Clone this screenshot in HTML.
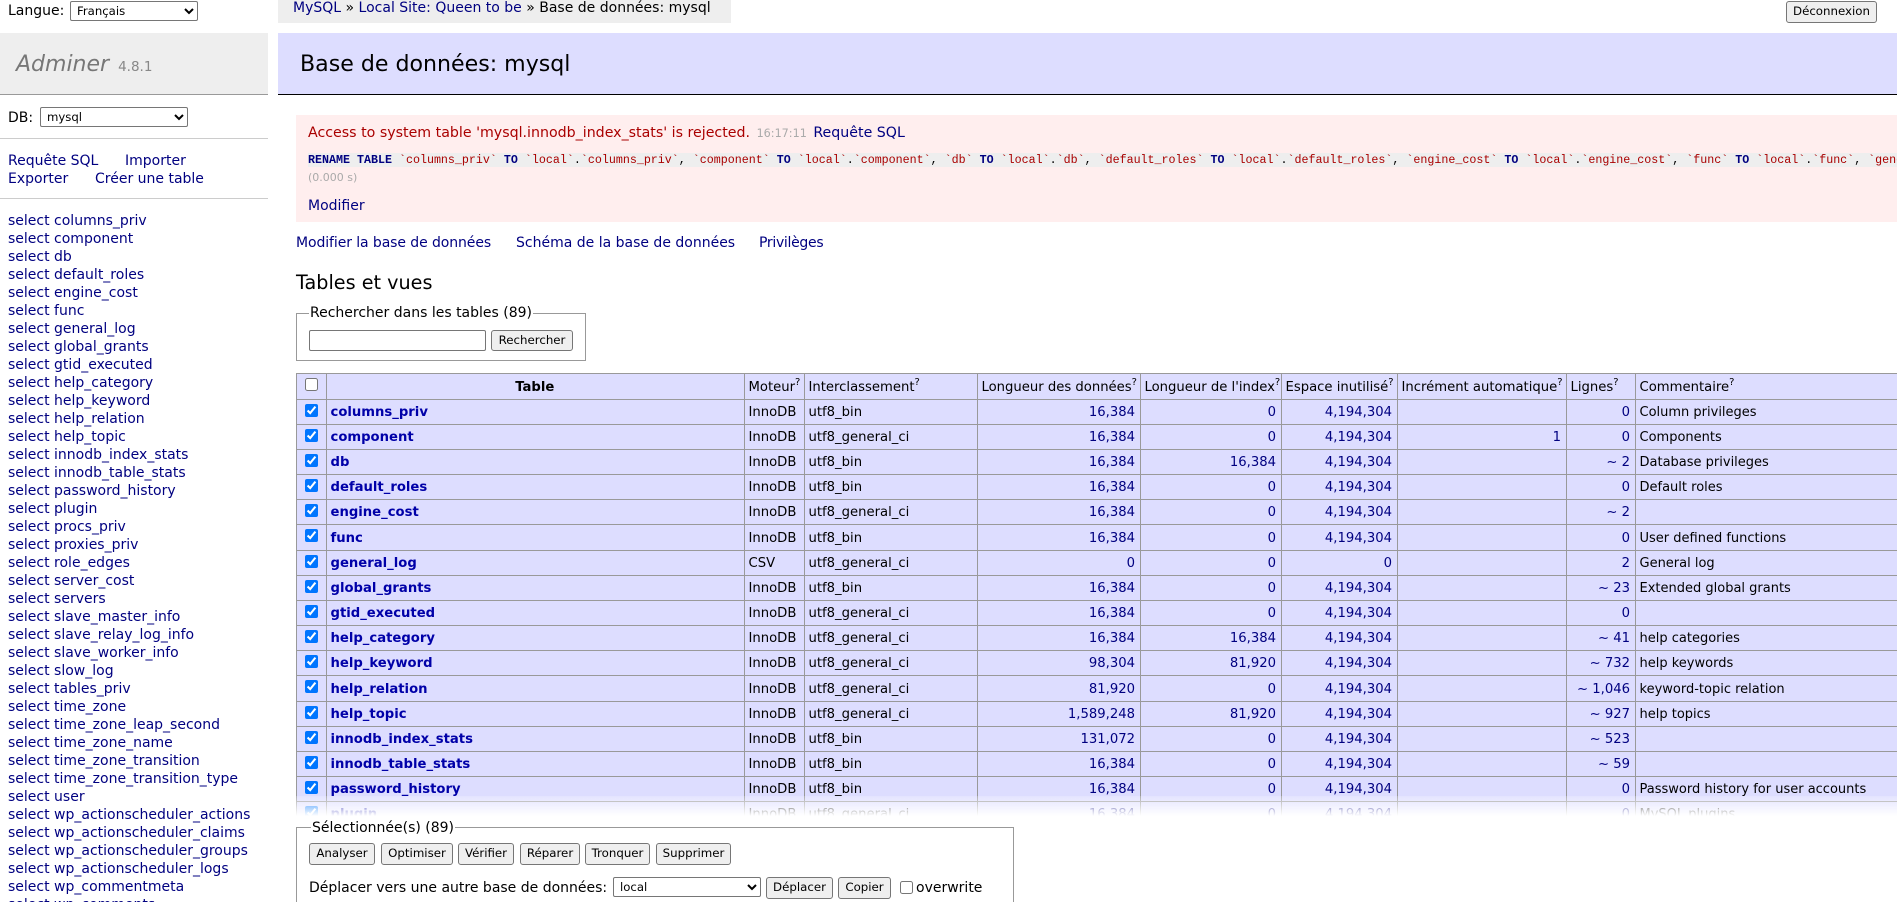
<!DOCTYPE html>
<html lang="fr"><head><meta charset="utf-8"><title>Base de données: mysql - Adminer</title>
<style>
html,body{margin:0;padding:0;width:1897px;height:902px;overflow:hidden;background:#fff}
body{font:14px/18px "DejaVu Sans","Liberation Sans",sans-serif;color:#000}
#page{position:absolute;left:0;top:0;width:1897px;height:902px;overflow:hidden;background:#fff}
a{color:#000080;text-decoration:none}
.a{position:absolute;white-space:nowrap}
.bar{position:absolute;left:0;width:268px;height:1px;background:#ccc}
select{position:absolute;box-sizing:border-box;font:11.7px "DejaVu Sans",sans-serif;margin:0;background:#fff;border:1px solid #767676;border-radius:2px;padding:0 0 0 2px}
.btn{position:absolute;box-sizing:border-box;font:11.8px/18px "DejaVu Sans",sans-serif;background:#efefef;border:1px solid #767676;border-radius:3px;text-align:center;color:#000;white-space:nowrap;overflow:hidden}
#side{height:691px;overflow:hidden}
#side a{display:block}
#wrap{position:absolute;left:296px;top:373px;width:1601px;height:529px;overflow:hidden}
#tb{border-collapse:collapse;table-layout:fixed;width:1704px;font-size:13.2px;line-height:18px}
#tb td,#tb th{border:1px solid #999;background:#ddf;padding:2px 5px 0 3.5px;white-space:nowrap;overflow:hidden;vertical-align:middle}
#tb th{font-weight:bold;text-align:center}
#tb thead td{font-weight:normal;padding-top:3px}
#tb td:first-child,#tb th:first-child{padding:0;text-align:center}
#tb input{margin:0;vertical-align:middle;position:relative;top:-1px}
#tb .n{text-align:right;color:#000080}
#tb .c{font-size:13px}
#tb b a{color:#0000a8}
#tb b{font-size:13.2px}
sup{font-size:10px;line-height:0;vertical-align:6px}
code{font:11.67px/14px "Liberation Mono",monospace;background:#eee;color:#a00}
code i{font-style:normal;font-weight:bold;color:#000080}
code u{text-decoration:none;color:#000}
</style></head><body><div id="page">

<div class="a" style="left:8px;top:2px">Langue:</div>
<select style="left:70px;top:1px;width:128px;height:20px"><option>Français</option></select>

<div class="a" style="left:0;top:33px;width:268px;height:61px;background:#eee;border-bottom:1px solid #999"></div>
<div class="a" style="left:16px;top:51px;font-size:22px;line-height:27px;font-style:italic;color:#777">Adminer <span style="font-style:normal;font-size:13.5px;margin-left:2px;color:#888">4.8.1</span></div>

<div class="a" style="left:8px;top:109px">DB:</div>
<select style="left:40px;top:107px;width:148px;height:20px"><option>mysql</option></select>
<div class="bar" style="top:138px"></div>

<div class="a" style="left:8px;top:152px"><a href="#">Requête SQL</a></div>
<div class="a" style="left:125px;top:152px"><a href="#">Importer</a></div>
<div class="a" style="left:8px;top:170px"><a href="#">Exporter</a></div>
<div class="a" style="left:95px;top:170px"><a href="#">Créer une table</a></div>
<div class="bar" style="top:198px"></div>

<div id="side" class="a" style="left:8px;top:212px">
<a href="#">select columns_priv</a>
<a href="#">select component</a>
<a href="#">select db</a>
<a href="#">select default_roles</a>
<a href="#">select engine_cost</a>
<a href="#">select func</a>
<a href="#">select general_log</a>
<a href="#">select global_grants</a>
<a href="#">select gtid_executed</a>
<a href="#">select help_category</a>
<a href="#">select help_keyword</a>
<a href="#">select help_relation</a>
<a href="#">select help_topic</a>
<a href="#">select innodb_index_stats</a>
<a href="#">select innodb_table_stats</a>
<a href="#">select password_history</a>
<a href="#">select plugin</a>
<a href="#">select procs_priv</a>
<a href="#">select proxies_priv</a>
<a href="#">select role_edges</a>
<a href="#">select server_cost</a>
<a href="#">select servers</a>
<a href="#">select slave_master_info</a>
<a href="#">select slave_relay_log_info</a>
<a href="#">select slave_worker_info</a>
<a href="#">select slow_log</a>
<a href="#">select tables_priv</a>
<a href="#">select time_zone</a>
<a href="#">select time_zone_leap_second</a>
<a href="#">select time_zone_name</a>
<a href="#">select time_zone_transition</a>
<a href="#">select time_zone_transition_type</a>
<a href="#">select user</a>
<a href="#">select wp_actionscheduler_actions</a>
<a href="#">select wp_actionscheduler_claims</a>
<a href="#">select wp_actionscheduler_groups</a>
<a href="#">select wp_actionscheduler_logs</a>
<a href="#">select wp_commentmeta</a>
<a href="#">select wp_comments</a>
</div>

<div class="a" style="left:278px;top:0;width:453px;height:23px;background:#eee"></div>
<div class="a" style="left:293px;top:-1px"><a href="#">MySQL</a> » <a href="#">Local Site: Queen to be</a> » Base de données: mysql</div>
<div class="btn" style="left:1786px;top:1px;width:91px;height:22px">Déconnexion</div>

<div class="a" style="left:278px;top:33px;width:1619px;height:61px;background:#ddf;border-bottom:1px solid #000"></div>
<div class="a" style="left:300px;top:51px;font-size:22.1px;line-height:27px">Base de données: mysql</div>

<div class="a" style="left:296px;top:115px;width:1601px;height:107px;background:#fee"></div>
<div class="a" style="left:308px;top:124px;color:#a00;font-size:14.2px">Access to system table 'mysql.innodb_index_stats' is rejected. <span style="color:#aaa;font-size:11.2px;margin:0 2px">16:17:11</span> <a href="#">Requête SQL</a></div>
<div class="a" style="left:308px;top:151px;line-height:16px;width:1589px;overflow:hidden"><code><i>RENAME</i> <i>TABLE</i> `columns_priv` <i>TO</i> `local`<u>.</u>`columns_priv`<u>,</u> `component` <i>TO</i> `local`<u>.</u>`component`<u>,</u> `db` <i>TO</i> `local`<u>.</u>`db`<u>,</u> `default_roles` <i>TO</i> `local`<u>.</u>`default_roles`<u>,</u> `engine_cost` <i>TO</i> `local`<u>.</u>`engine_cost`<u>,</u> `func` <i>TO</i> `local`<u>.</u>`func`<u>,</u> `general_log` <i>TO</i> `local`<u>.</u>`general_log`<u>,</u></code></div>
<div class="a" style="left:308px;top:169px;font-size:11px;color:#aaa">(0.000 s)</div>
<div class="a" style="left:308px;top:197px"><a href="#">Modifier</a></div>

<div class="a" style="left:296px;top:234px"><a href="#" style="letter-spacing:-.09px">Modifier la base de données</a></div>
<div class="a" style="left:516px;top:234px"><a href="#">Schéma de la base de données</a></div>
<div class="a" style="left:759px;top:234px"><a href="#" style="letter-spacing:-.3px">Privilèges</a></div>

<div class="a" style="left:296px;top:271px;font-size:19.2px;line-height:23px">Tables et vues</div>

<div class="a" style="left:296px;top:313px;width:288px;height:46px;border:1px solid #999"></div>
<div class="a" style="left:309px;top:304px;background:#fff;padding:0 1px">Rechercher dans les tables (89)</div>
<div class="a" style="left:309px;top:330px;width:177px;height:21px;box-sizing:border-box;border:1px solid #767676;border-radius:2px;background:#fff"></div>
<div class="btn" style="left:491px;top:330px;width:82px;height:21px">Rechercher</div>

<div id="wrap"><table id="tb">
<colgroup><col style="width:30px"><col style="width:418px"><col style="width:60px"><col style="width:173px"><col style="width:163px"><col style="width:141px"><col style="width:116px"><col style="width:169px"><col style="width:69px"><col style="width:565px"></colgroup>
<thead><tr style="height:26px"><td><input type="checkbox"></td><th style="text-align:center">Table</th><td>Moteur<sup>?</sup></td><td>Interclassement<sup>?</sup></td><td>Longueur des données<sup>?</sup></td><td>Longueur de l'index<sup>?</sup></td><td>Espace inutilisé<sup>?</sup></td><td>Incrément automatique<sup>?</sup></td><td>Lignes<sup>?</sup></td><td>Commentaire<sup>?</sup></td></tr></thead>
<tbody>
<tr style="height:25px"><td><input type="checkbox" checked></td><td><b><a href="#">columns_priv</a></b></td><td>InnoDB</td><td>utf8_bin</td><td class="n">16,384</td><td class="n">0</td><td class="n">4,194,304</td><td class="n"></td><td class="n">0</td><td class="c">Column privileges</td></tr>
<tr style="height:25px"><td><input type="checkbox" checked></td><td><b><a href="#">component</a></b></td><td>InnoDB</td><td>utf8_general_ci</td><td class="n">16,384</td><td class="n">0</td><td class="n">4,194,304</td><td class="n">1</td><td class="n">0</td><td class="c">Components</td></tr>
<tr style="height:25px"><td><input type="checkbox" checked></td><td><b><a href="#">db</a></b></td><td>InnoDB</td><td>utf8_bin</td><td class="n">16,384</td><td class="n">16,384</td><td class="n">4,194,304</td><td class="n"></td><td class="n">~ 2</td><td class="c">Database privileges</td></tr>
<tr style="height:25px"><td><input type="checkbox" checked></td><td><b><a href="#">default_roles</a></b></td><td>InnoDB</td><td>utf8_bin</td><td class="n">16,384</td><td class="n">0</td><td class="n">4,194,304</td><td class="n"></td><td class="n">0</td><td class="c">Default roles</td></tr>
<tr style="height:25px"><td><input type="checkbox" checked></td><td><b><a href="#">engine_cost</a></b></td><td>InnoDB</td><td>utf8_general_ci</td><td class="n">16,384</td><td class="n">0</td><td class="n">4,194,304</td><td class="n"></td><td class="n">~ 2</td><td></td></tr>
<tr style="height:26px"><td><input type="checkbox" checked></td><td><b><a href="#">func</a></b></td><td>InnoDB</td><td>utf8_bin</td><td class="n">16,384</td><td class="n">0</td><td class="n">4,194,304</td><td class="n"></td><td class="n">0</td><td class="c">User defined functions</td></tr>
<tr style="height:25px"><td><input type="checkbox" checked></td><td><b><a href="#">general_log</a></b></td><td>CSV</td><td>utf8_general_ci</td><td class="n">0</td><td class="n">0</td><td class="n">0</td><td class="n"></td><td class="n">2</td><td class="c">General log</td></tr>
<tr style="height:25px"><td><input type="checkbox" checked></td><td><b><a href="#">global_grants</a></b></td><td>InnoDB</td><td>utf8_bin</td><td class="n">16,384</td><td class="n">0</td><td class="n">4,194,304</td><td class="n"></td><td class="n">~ 23</td><td class="c">Extended global grants</td></tr>
<tr style="height:25px"><td><input type="checkbox" checked></td><td><b><a href="#">gtid_executed</a></b></td><td>InnoDB</td><td>utf8_general_ci</td><td class="n">16,384</td><td class="n">0</td><td class="n">4,194,304</td><td class="n"></td><td class="n">0</td><td></td></tr>
<tr style="height:25px"><td><input type="checkbox" checked></td><td><b><a href="#">help_category</a></b></td><td>InnoDB</td><td>utf8_general_ci</td><td class="n">16,384</td><td class="n">16,384</td><td class="n">4,194,304</td><td class="n"></td><td class="n">~ 41</td><td class="c">help categories</td></tr>
<tr style="height:25px"><td><input type="checkbox" checked></td><td><b><a href="#">help_keyword</a></b></td><td>InnoDB</td><td>utf8_general_ci</td><td class="n">98,304</td><td class="n">81,920</td><td class="n">4,194,304</td><td class="n"></td><td class="n">~ 732</td><td class="c">help keywords</td></tr>
<tr style="height:26px"><td><input type="checkbox" checked></td><td><b><a href="#">help_relation</a></b></td><td>InnoDB</td><td>utf8_general_ci</td><td class="n">81,920</td><td class="n">0</td><td class="n">4,194,304</td><td class="n"></td><td class="n">~ 1,046</td><td class="c">keyword-topic relation</td></tr>
<tr style="height:25px"><td><input type="checkbox" checked></td><td><b><a href="#">help_topic</a></b></td><td>InnoDB</td><td>utf8_general_ci</td><td class="n">1,589,248</td><td class="n">81,920</td><td class="n">4,194,304</td><td class="n"></td><td class="n">~ 927</td><td class="c">help topics</td></tr>
<tr style="height:25px"><td><input type="checkbox" checked></td><td><b><a href="#">innodb_index_stats</a></b></td><td>InnoDB</td><td>utf8_bin</td><td class="n">131,072</td><td class="n">0</td><td class="n">4,194,304</td><td class="n"></td><td class="n">~ 523</td><td></td></tr>
<tr style="height:25px"><td><input type="checkbox" checked></td><td><b><a href="#">innodb_table_stats</a></b></td><td>InnoDB</td><td>utf8_bin</td><td class="n">16,384</td><td class="n">0</td><td class="n">4,194,304</td><td class="n"></td><td class="n">~ 59</td><td></td></tr>
<tr style="height:25px"><td><input type="checkbox" checked></td><td><b><a href="#">password_history</a></b></td><td>InnoDB</td><td>utf8_bin</td><td class="n">16,384</td><td class="n">0</td><td class="n">4,194,304</td><td class="n"></td><td class="n">0</td><td class="c">Password history for user accounts</td></tr>
<tr style="height:25px"><td><input type="checkbox" checked></td><td><b><a href="#">plugin</a></b></td><td>InnoDB</td><td>utf8_general_ci</td><td class="n">16,384</td><td class="n">0</td><td class="n">4,194,304</td><td class="n"></td><td class="n">0</td><td class="c">MySQL plugins</td></tr>
</tbody></table></div>

<div class="a" style="left:278px;top:796px;width:1619px;height:20px;background:linear-gradient(rgba(255,255,255,.2),#fff)"></div>
<div class="a" style="left:278px;top:816px;width:1619px;height:86px;background:#fff"></div>
<div class="a" style="left:296px;top:827px;width:716px;height:80px;border:1px solid #999"></div>
<div class="a" style="left:311px;top:819px;background:#fff;padding:0 1px">Sélectionnée(s) (89)</div>
<div class="btn" style="left:309px;top:843px;width:66px;height:22px">Analyser</div>
<div class="btn" style="left:381px;top:843px;width:72px;height:22px">Optimiser</div>
<div class="btn" style="left:458px;top:843px;width:56px;height:22px">Vérifier</div>
<div class="btn" style="left:520px;top:843px;width:60px;height:22px">Réparer</div>
<div class="btn" style="left:585px;top:843px;width:65px;height:22px">Tronquer</div>
<div class="btn" style="left:656px;top:843px;width:75px;height:22px">Supprimer</div>
<div class="a" style="left:309px;top:879px">Déplacer vers une autre base de données:</div>
<select style="left:613px;top:877px;width:148px;height:20px"><option>local</option></select>
<div class="btn" style="left:766px;top:877px;width:67px;height:22px">Déplacer</div>
<div class="btn" style="left:838px;top:877px;width:53px;height:22px">Copier</div>
<input type="checkbox" class="a" style="left:900px;top:881px;margin:0">
<div class="a" style="left:916px;top:879px">overwrite</div>
</div></body></html>
